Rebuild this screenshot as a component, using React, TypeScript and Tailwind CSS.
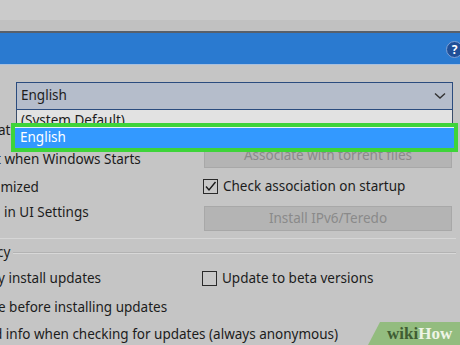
import React from "react";

function Check({ checked }: { checked?: boolean }) {
  return (
    <div className="w-[15px] h-[15px] border border-[#2a2a2a] bg-[#c8c8c8] flex items-center justify-center shrink-0">
      {checked && (
        <svg width="13" height="13" viewBox="0 0 13 13">
          <path d="M2 6.5 L5 10 L11.5 2" fill="none" stroke="#1a1a1a" strokeWidth="1.4" />
        </svg>
      )}
    </div>
  );
}

export default function App() {
  return (
    <div className="w-[460px] h-[345px] overflow-hidden relative bg-[#c5c5c5] text-[#1c1c1c] font-['Noto_Sans',sans-serif] text-[13.5px]">
      <div className="h-[20px] bg-[#cbcbcb]" />
      <div className="h-[11px] bg-[#c1c1c1]" />
      <div className="h-[2px] bg-[#58606a]" />
      <div className="h-[31px] bg-[#2a7ad0] relative">
        <div className="absolute left-[446px] top-[8px] w-[17px] h-[17px] rounded-full bg-[#1f4f98] border border-[#7d9fd4] flex items-center justify-center text-white text-[12px] font-bold leading-none">
          ?
        </div>
      </div>
      <div className="h-[1px] bg-[#a9c0de]" />

      <div className="relative pt-[17px] flex flex-col">
        {/* Language dropdown */}
        <div className="ml-[16px] w-[437px] h-[28px] border border-[#2b4c7e] bg-[#b5bdcb] flex items-center justify-between pl-[4px] pr-[6px]">
          <span className="leading-none">English</span>
          <svg width="12" height="8" viewBox="0 0 12 8">
            <path d="M1 1.5 L6 6 L11 1.5" fill="none" stroke="#333" strokeWidth="1.4" />
          </svg>
        </div>

        <div className="flex">
          <div className="w-[204px] flex flex-col">
            <div className="mt-[10px] h-[20px] leading-[20px] -ml-[2px] whitespace-nowrap">ation</div>
            <div className="mt-[9px] h-[20px] leading-[20px] -ml-[4px] whitespace-nowrap">t when Windows Starts</div>
            <div className="mt-[8px] h-[20px] leading-[20px] -ml-[3px] whitespace-nowrap">imized</div>
            <div className="mt-[5px] h-[20px] leading-[20px] ml-[4px] whitespace-nowrap">in UI Settings</div>
          </div>
          <div className="w-[248px] flex flex-col">
            <div className="mt-[33px] h-[25px] border border-[#a8a8a8] bg-[#b4b4b4] text-[#8a8a8a] flex items-center justify-center">
              Associate with torrent files
            </div>
            <div className="mt-[8px] h-[20px] flex items-center gap-[5px] -ml-[1px]">
              <Check checked />
              <span>Check association on startup</span>
            </div>
            <div className="mt-[10px] h-[25px] border border-[#a8a8a8] bg-[#b4b4b4] text-[#8a8a8a] flex items-center justify-center">
              Install IPv6/Teredo
            </div>
          </div>
        </div>

        <div className="mt-[7px] w-[456px] h-[1px] bg-[#d6d6d6]" />

        <div className="mt-[4px] h-[20px] flex items-center">
          <span className="-ml-[3px] leading-none">cy</span>
          <div className="ml-[3px] w-[443px] flex flex-col">
            <div className="h-[1px] bg-[#b3b3b3]" />
            <div className="h-[1px] bg-[#d8d8d8]" />
          </div>
        </div>

        <div className="mt-[5px] h-[20px] flex items-center">
          <div className="w-[202px] -ml-[2px] whitespace-nowrap">y install updates</div>
          <div className="flex items-center gap-[5px] ml-[2px]">
            <Check />
            <span>Update to beta versions</span>
          </div>
        </div>
        <div className="mt-[9px] h-[20px] leading-[20px] -ml-[2px] whitespace-nowrap">e before installing updates</div>
        <div className="mt-[7px] h-[20px] leading-[20px] -ml-[6px] whitespace-nowrap">d info when checking for updates (always anonymous)</div>

        {/* Dropdown list overlay */}
        <div className="absolute left-[16px] top-[45px] w-[437px] h-[40px] bg-[#e2e2e2] border-x border-b border-[#3a4d6a]">
          <div className="pl-[4px] h-[20px] leading-[20px]">(System Default)</div>
        </div>
        <div className="absolute left-[11px] top-[58px] w-[447px] h-[29px] border-[4px] border-[#3ed43a]">
          <div className="h-full bg-[#3399ff] border-t border-[#e8f2ff] text-white pl-[5px] leading-[19px]">English</div>
        </div>
      </div>

      {/* wikiHow badge */}
      <div className="absolute left-[368px] top-[322px] w-[100px] h-[23px] bg-[#93bc7f] [clip-path:polygon(12px_0,100%_0,100%_100%,0_100%)] flex items-center pl-[19px] font-['Liberation_Serif',serif] font-bold text-[17px] leading-none">
        <span className="text-[#3f5d33]">wiki</span>
        <span className="text-[#eef4e6]">How</span>
      </div>
    </div>
  );
}
